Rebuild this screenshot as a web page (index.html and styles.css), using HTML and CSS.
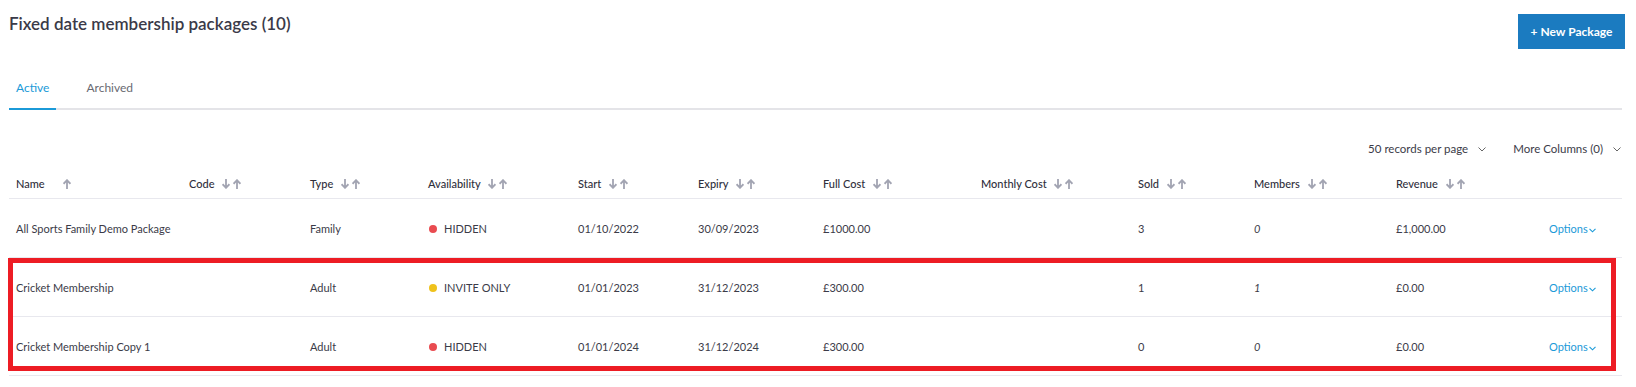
FILE: index.html
```html
<!DOCTYPE html>
<html lang="en">
<head>
  <meta charset="UTF-8" />
  <title>Fixed date membership packages</title>
  <link rel="stylesheet" href="styles.css">
</head>
<body>
  <div class="page">
    <div class="top-bar">
      <h1>Fixed date membership packages (10)</h1>
      <button class="new-btn">+ New Package</button>
    </div>

    <div class="tabs">
      <a class="tab active">Active</a>
      <a class="tab">Archived</a>
    </div>

    <div class="toolbar">
      <span class="dropdown">50 records per page
        <svg class="chev" width="8" height="5" viewBox="0 0 8 5"><path d="M0.5 0.5 L4 4 L7.5 0.5" fill="none" stroke="#666" stroke-width="1"/></svg>
      </span>
      <span class="dropdown">More Columns (0)
        <svg class="chev" width="8" height="5" viewBox="0 0 8 5"><path d="M0.5 0.5 L4 4 L7.5 0.5" fill="none" stroke="#666" stroke-width="1"/></svg>
      </span>
    </div>

    <div class="table-wrap">
      <table class="packages">
        <colgroup>
          <col style="width:173px"><col style="width:121px"><col style="width:118px"><col style="width:150px">
          <col style="width:120px"><col style="width:125px"><col style="width:158px"><col style="width:157px">
          <col style="width:116px"><col style="width:142px"><col style="width:153px"><col style="width:80px">
        </colgroup>
        <thead>
          <tr>
            <th>Name <span class="sort"><i class="down hidden"></i><i class="up"></i></span></th>
            <th>Code <span class="sort"><i class="down"></i><i class="up"></i></span></th>
            <th>Type <span class="sort"><i class="down"></i><i class="up"></i></span></th>
            <th>Availability <span class="sort"><i class="down"></i><i class="up"></i></span></th>
            <th>Start <span class="sort"><i class="down"></i><i class="up"></i></span></th>
            <th>Expiry <span class="sort"><i class="down"></i><i class="up"></i></span></th>
            <th>Full Cost <span class="sort"><i class="down"></i><i class="up"></i></span></th>
            <th>Monthly Cost <span class="sort"><i class="down"></i><i class="up"></i></span></th>
            <th>Sold <span class="sort"><i class="down"></i><i class="up"></i></span></th>
            <th>Members <span class="sort"><i class="down"></i><i class="up"></i></span></th>
            <th>Revenue <span class="sort"><i class="down"></i><i class="up"></i></span></th>
            <th></th>
          </tr>
        </thead>
        <tbody>
          <tr>
            <td>All Sports Family Demo Package</td>
            <td></td>
            <td>Family</td>
            <td><span class="dot red"></span>HIDDEN</td>
            <td>01/10/2022</td>
            <td>30/09/2023</td>
            <td>£1000.00</td>
            <td></td>
            <td>3</td>
            <td class="members">0</td>
            <td>£1,000.00</td>
            <td><a class="options">Options<svg width="7" height="5" viewBox="0 0 7 5"><path d="M0.5 0.8 L3.5 3.8 L6.5 0.8" fill="none" stroke="#1b9ad8" stroke-width="1.1"/></svg></a></td>
          </tr>
          <tr>
            <td>Cricket Membership</td>
            <td></td>
            <td>Adult</td>
            <td><span class="dot yellow"></span>INVITE ONLY</td>
            <td>01/01/2023</td>
            <td>31/12/2023</td>
            <td>£300.00</td>
            <td></td>
            <td>1</td>
            <td class="members">1</td>
            <td>£0.00</td>
            <td><a class="options">Options<svg width="7" height="5" viewBox="0 0 7 5"><path d="M0.5 0.8 L3.5 3.8 L6.5 0.8" fill="none" stroke="#1b9ad8" stroke-width="1.1"/></svg></a></td>
          </tr>
          <tr>
            <td>Cricket Membership Copy 1</td>
            <td></td>
            <td>Adult</td>
            <td><span class="dot red"></span>HIDDEN</td>
            <td>01/01/2024</td>
            <td>31/12/2024</td>
            <td>£300.00</td>
            <td></td>
            <td>0</td>
            <td class="members">0</td>
            <td>£0.00</td>
            <td><a class="options">Options<svg width="7" height="5" viewBox="0 0 7 5"><path d="M0.5 0.8 L3.5 3.8 L6.5 0.8" fill="none" stroke="#1b9ad8" stroke-width="1.1"/></svg></a></td>
          </tr>
        </tbody>
      </table>
      <div class="highlight"></div>
    </div>
  </div>
</body>
</html>
```

FILE: styles.css
```css
body {
  margin: 0;
  background: #fff;
  font-family: Lato, "Noto Sans", sans-serif;
  color: #3b3b48;
}

.page {
  padding: 0 11px 0 9px;
}

.top-bar {
  display: flex;
  justify-content: space-between;
  align-items: flex-start;
  padding-top: 14px;
}

h1 {
  margin: 0;
  font-size: 17px;
  line-height: 20px;
  font-weight: 600;
  color: #3a3a48;
}

.new-btn {
  width: 107px;
  height: 35px;
  padding: 0;
  border: none;
  background: #1b7bc0;
  color: #fff;
  font-family: Lato, sans-serif;
  font-size: 12px;
  font-weight: 700;
  cursor: pointer;
}

.tabs {
  display: flex;
  gap: 23px;
  margin-top: 31px;
  margin-right: 3px;
  border-bottom: 2px solid #e4e4e8;
}

.tab {
  padding: 0 7px 13px;
  margin-bottom: -2px;
  font-size: 12px;
  line-height: 15px;
  color: #6a6a72;
  border-bottom: 2px solid transparent;
}

.tab.active {
  color: #1b9ad8;
  border-bottom-color: #1b9ad8;
}

.toolbar {
  display: flex;
  justify-content: flex-end;
  gap: 27px;
  margin-top: 31px;
  padding-right: 4px;
  font-size: 11.5px;
  line-height: 16px;
  color: #3b3b48;
}

.dropdown {
  display: flex;
  align-items: center;
}

.chev {
  margin-left: 10px;
}

.table-wrap {
  position: relative;
  margin-right: 3px;
}

.packages {
  width: 100%;
  table-layout: fixed;
  border-collapse: separate;
  border-spacing: 0;
  font-size: 11px;
}

.packages th {
  padding: 20px 7px 8px;
  line-height: 13px;
  text-align: left;
  font-weight: 500;
  color: #2f2f3c;
  border-bottom: 1px solid #e8e8ee;
  white-space: nowrap;
}

.packages td {
  height: 58px;
  padding: 0 7px;
  line-height: 13px;
  color: #3b3b48;
  border-bottom: 1px solid #e8e8ee;
  white-space: nowrap;
}

.sort {
  display: inline-flex;
  gap: 3px;
  margin-left: 5px;
  vertical-align: -1px;
}

.sort i {
  display: block;
  width: 8px;
  height: 10px;
  background: no-repeat center;
}

.sort .up {
  background-image: url("data:image/svg+xml,%3Csvg xmlns='http://www.w3.org/2000/svg' width='8' height='10' viewBox='0 0 8 10'%3E%3Cpath d='M4 10V1.5M0.6 4.8L4 1.2L7.4 4.8' fill='none' stroke='%23a2a4b2' stroke-width='1.8'/%3E%3C/svg%3E");
}

.sort .down {
  background-image: url("data:image/svg+xml,%3Csvg xmlns='http://www.w3.org/2000/svg' width='8' height='10' viewBox='0 0 8 10'%3E%3Cpath d='M4 0V8.5M0.6 5.2L4 8.8L7.4 5.2' fill='none' stroke='%23a2a4b2' stroke-width='1.8'/%3E%3C/svg%3E");
}

.sort .hidden {
  visibility: hidden;
}

.dot {
  display: inline-block;
  width: 8px;
  height: 8px;
  border-radius: 50%;
  margin: 0 7px 0 1px;
  vertical-align: -0.5px;
}

.dot.red {
  background: #e94b50;
}

.dot.yellow {
  background: #efc21c;
}

.members {
  font-style: italic;
}

.options {
  color: #1b9ad8;
  cursor: pointer;
}

.options svg {
  margin-left: 1px;
  vertical-align: 0;
}

.highlight {
  position: absolute;
  top: 101px;
  left: -1px;
  width: 1608px;
  height: 113px;
  box-sizing: border-box;
  border: 5px solid #ed1c24;
  pointer-events: none;
}
```
